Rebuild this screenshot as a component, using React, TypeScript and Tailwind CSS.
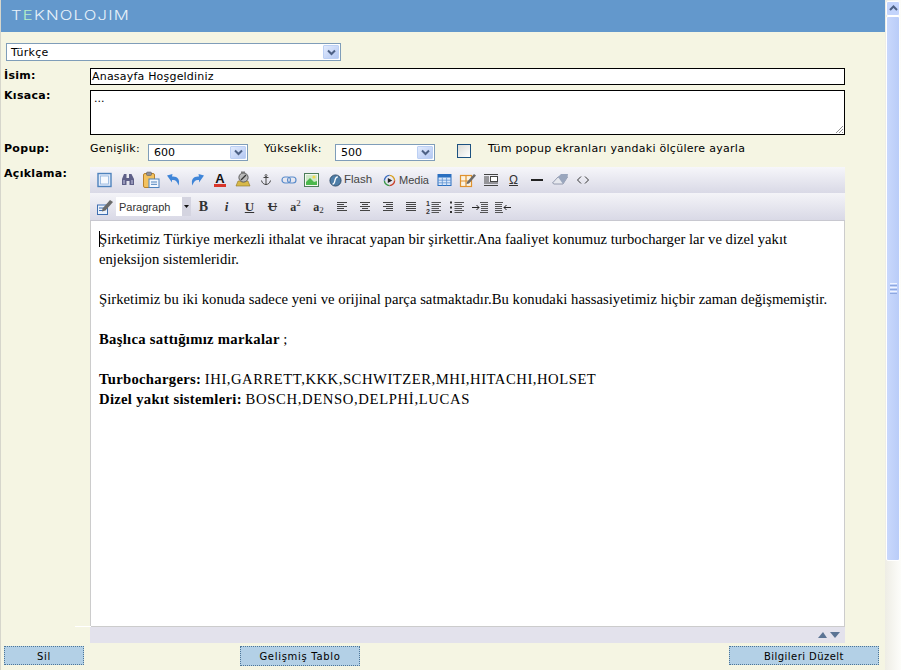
import React from "react";

const V = "[font-family:DejaVu_Sans,sans-serif]";

function Chevron() {
  return (
    <span className="flex h-full w-[16px] items-center justify-center rounded-[1px] border border-[#bcd0f4] bg-gradient-to-br from-[#e2ebfd] to-[#b4c8f2]">
      <svg width="9" height="7" viewBox="0 0 9 7">
        <path d="M1 1.5 L4.5 5 L8 1.5" fill="none" stroke="#4d6185" strokeWidth="2" />
      </svg>
    </span>
  );
}

function Select({ value, className, textClass }: { value: string; className: string; textClass: string }) {
  return (
    <div className={`flex items-stretch border border-[#7f9db9] bg-white p-px ${className}`}>
      <span className={`flex-1 text-[11px] text-black ${V} ${textClass}`}>{value}</span>
      <Chevron />
    </div>
  );
}

const S = ({ children }: { children: React.ReactNode }) => (
  <svg width="18" height="18" viewBox="0 0 18 18">{children}</svg>
);

const Lines = ({ rows }: { rows: [number, number][] }) => (
  <S>
    {rows.map(([x, w], i) => (
      <rect key={i} x={x} y={4 + i * 2} width={w} height="1" fill="#444" />
    ))}
  </S>
);

const Fullscreen = () => (
  <S>
    <rect x="2" y="2.5" width="13" height="13" fill="#dfeafa" stroke="#4f83bd" strokeWidth="1.4" />
    <rect x="4.5" y="5" width="8" height="8" fill="#f6f9fe" stroke="#8fb2dc" strokeWidth="0.8" />
  </S>
);
const Binoculars = () => (
  <S>
    <path d="M3 8 L5 3 H7.5 V7 H10 V3 H12.5 L15 8 V14 H10.5 V10 H7.5 V14 H3 Z" fill="#5f6088" />
    <rect x="4" y="9" width="2" height="4" fill="#9596b8" />
    <rect x="12" y="9" width="2" height="4" fill="#9596b8" />
  </S>
);
const Paste = () => (
  <S>
    <rect x="1.5" y="2.5" width="11" height="14" rx="1.5" fill="#f3c25f" stroke="#b9812a" />
    <rect x="4.5" y="1" width="5" height="3.5" rx="1" fill="#8f8f98" stroke="#555" strokeWidth="0.5" />
    <rect x="7" y="8" width="10" height="8.5" fill="#f4f8fe" stroke="#4f83bd" />
    <rect x="9" y="10.5" width="6" height="1" fill="#4f83bd" />
    <rect x="9" y="12.8" width="6" height="1" fill="#4f83bd" />
  </S>
);
const Undo = () => (
  <S>
    <path d="M2 4.5 L7.5 3 L7 5.5 C12 5 15.5 8 13.5 14.5 C12.5 10.5 10.5 8.5 7 9 L7 11.5 Z" fill="#3f85d8" />
  </S>
);
const Redo = () => (
  <S>
    <path d="M16 4.5 L10.5 3 L11 5.5 C6 5 2.5 8 4.5 14.5 C5.5 10.5 7.5 8.5 11 9 L11 11.5 Z" fill="#3f85d8" />
  </S>
);
const TextColor = () => (
  <S>
    <text x="9" y="12" textAnchor="middle" fontSize="13" fontWeight="700" fontFamily="Liberation Sans" fill="#111">A</text>
    <rect x="3" y="13" width="12" height="3" fill="#d8352a" />
  </S>
);
const Highlight = () => (
  <S>
    <path d="M2 15 L4 10 L14 10 L16 15 Z" fill="#d8b94a" stroke="#8c7426" strokeWidth="0.6" />
    <circle cx="9.5" cy="6.5" r="4.6" fill="#b8b8b8" stroke="#5c5c5c" />
    <path d="M7 9 L12 4" stroke="#333" strokeWidth="1.2" />
    <rect x="7" y="0.5" width="4" height="2" fill="#777" />
  </S>
);
const AnchorIcon = () => (
  <S>
    <path d="M9 5 V14 M6.5 6.5 H11.5 M4.5 9.5 C5 12 7 13.5 9 13.5 C11 13.5 13 12 13.5 9.5" fill="none" stroke="#444" strokeWidth="1" />
    <circle cx="9" cy="4.5" r="1" fill="none" stroke="#444" strokeWidth="0.8" />
  </S>
);
const LinkIcon = () => (
  <S>
    <rect x="2" y="6" width="8.5" height="6" rx="3" fill="none" stroke="#5a8ccb" strokeWidth="1.2" />
    <rect x="7.5" y="6" width="8.5" height="6" rx="3" fill="none" stroke="#5a8ccb" strokeWidth="1.2" />
  </S>
);
const ImageIcon = () => (
  <S>
    <rect x="1.5" y="2.5" width="14" height="13" fill="#f4f8f0" stroke="#4d7d5a" />
    <rect x="3" y="4" width="11" height="7" fill="#cfe8c8" />
    <circle cx="11" cy="6" r="1.6" fill="#f2d84a" />
    <path d="M3 14 L3 11 L7 7 L11 11 L14 10 V14 Z" fill="#4cb84c" />
  </S>
);
const FlashIcon = () => (
  <svg width="13" height="13" viewBox="0 0 14 14">
    <circle cx="7" cy="7" r="6" fill="#4e7ea8" stroke="#2d4a66" />
    <path d="M9.5 3 C7 3.2 6.8 5 6.4 7 C6 9 5.8 10.6 3.8 11" fill="none" stroke="#fff" strokeWidth="1.4" />
  </svg>
);
const MediaIcon = () => (
  <svg width="13" height="13" viewBox="0 0 14 14">
    <path d="M7 1.5 A5.5 5.5 0 0 1 12.5 7" fill="none" stroke="#d8a020" strokeWidth="1.5" />
    <path d="M12.5 7 A5.5 5.5 0 0 1 7 12.5" fill="none" stroke="#c8402a" strokeWidth="1.5" />
    <path d="M7 12.5 A5.5 5.5 0 0 1 1.5 7" fill="none" stroke="#3a9a48" strokeWidth="1.5" />
    <path d="M1.5 7 A5.5 5.5 0 0 1 7 1.5" fill="none" stroke="#3a6cc0" strokeWidth="1.5" />
    <path d="M5.2 4.2 L10 7 L5.2 9.8 Z" fill="#222" />
  </svg>
);
const TableIcon = () => (
  <S>
    <rect x="2" y="3.5" width="13" height="11" fill="#dbe8fa" stroke="#2a6fc0" />
    <rect x="2" y="3.5" width="13" height="3" fill="#2a6fc0" />
    <path d="M6.3 6.5 V14.5 M10.6 6.5 V14.5 M2 9.2 H15 M2 11.8 H15" stroke="#5f93d2" strokeWidth="0.8" />
  </S>
);
const TableEdit = () => (
  <S>
    <rect x="1.5" y="4.5" width="11" height="11" fill="#fbf3e2" stroke="#e0922e" strokeWidth="1.2" />
    <path d="M7 4.5 V15.5 M1.5 10 H12.5" stroke="#e0922e" strokeWidth="1.2" />
    <path d="M8 11 L15 3 L17 4.5 L10 12.5 L7.5 13 Z" fill="#6a6a6a" />
  </S>
);
const Html = () => (
  <S>
    <path d="M2 3.5 H16 M2 14.5 H16 M2 12 H16 M2 6 H7 M2 8 H7 M2 10 H7" stroke="#444" strokeWidth="1" />
    <rect x="8.5" y="5.5" width="7" height="5" fill="#fff" stroke="#444" />
  </S>
);
const Omega = () => (
  <span className="text-[12px] leading-[18px] text-[#333] underline [font-family:Liberation_Sans,sans-serif]">Ω</span>
);
const Hr = () => (
  <S>
    <rect x="3" y="8" width="12" height="2" fill="#222" />
  </S>
);
const Eraser = () => (
  <S>
    <path d="M1.5 12 L7 6 H16.5 L12 13 H3 Z" fill="#e6e8ee" stroke="#8089a0" strokeWidth="0.8" />
    <path d="M7 6 L10 3 H17 L16.5 6 L12 13 Z" fill="#9aa6bd" />
  </S>
);
const Code = () => (
  <S>
    <path d="M7 5.5 L3.5 9 L7 12.5 M11 5.5 L14.5 9 L11 12.5" fill="none" stroke="#333" />
  </S>
);
const EditIcon = () => (
  <S>
    <rect x="1.5" y="7" width="10" height="9.5" fill="#eaf1fb" stroke="#3f6fb0" />
    <path d="M3 10 H8 M3 12.5 H7" stroke="#3f6fb0" />
    <path d="M6.5 10.5 L14 2 L17 4 L9.5 12.5 L6 13.5 Z" fill="#6a6a6a" />
  </S>
);
const Ol = () => (
  <S>
    <text x="1" y="8" fontSize="7" fontWeight="700" fontFamily="Liberation Sans" fill="#333">1</text>
    <text x="1" y="15.5" fontSize="7" fontWeight="700" fontFamily="Liberation Sans" fill="#333">2</text>
    <path d="M6.5 4.5 H16 M6.5 6.5 H14 M6.5 8.5 H16 M6.5 10.5 H14 M6.5 12.5 H16 M6.5 14.5 H14" stroke="#444" strokeWidth="0.9" />
  </S>
);
const Ul = () => (
  <S>
    <path d="M6.5 4.5 H16 M6.5 6.5 H14 M6.5 8.5 H16 M6.5 10.5 H14 M6.5 12.5 H16 M6.5 14.5 H14" stroke="#444" strokeWidth="0.9" />
    <rect x="2" y="3.5" width="2" height="2" fill="#333" />
    <rect x="2" y="8.5" width="2" height="2" fill="#333" />
    <rect x="2" y="13" width="2" height="2" fill="#333" />
  </S>
);
const Indent = () => (
  <S>
    <path d="M9 4.5 H17 M10 6.5 H17 M10 8.5 H17 M10 10.5 H17 M10 12.5 H17 M9 14.5 H17" stroke="#444" strokeWidth="0.9" />
    <path d="M1 9.5 H8 M5.5 7 L8 9.5 L5.5 12" fill="none" stroke="#222" />
  </S>
);
const Outdent = () => (
  <S>
    <path d="M1 4.5 H9 M1 6.5 H8 M1 8.5 H8 M1 10.5 H8 M1 12.5 H8 M1 14.5 H9" stroke="#444" strokeWidth="0.9" />
    <path d="M17 9.5 H10 M12.5 7 L10 9.5 L12.5 12" fill="none" stroke="#222" />
  </S>
);

const Btn = ({ children }: { children: React.ReactNode }) => (
  <span className="flex h-[26px] w-[23px] shrink-0 items-center justify-center">{children}</span>
);

const G = ({ children, className }: { children: React.ReactNode; className?: string }) => (
  <span className={`text-[#333] [font-family:Liberation_Serif,serif] ${className ?? ""}`}>{children}</span>
);

function Label({ children, className }: { children: React.ReactNode; className?: string }) {
  return (
    <span className={`w-[86px] shrink-0 pl-[3px] text-[11px] font-bold tracking-[0.3px] text-black ${V} ${className ?? ""}`}>
      {children}
    </span>
  );
}

const action = `border border-dotted border-[#4d7698] bg-[#b3d0e6] pt-px text-[10px] text-black ${V}`;
const strong = "font-bold tracking-[0.3px]";

export default function App() {
  return (
    <div className="flex h-[670px] w-[901px] overflow-hidden bg-[#f5f5e3]">
      <main className="flex h-[670px] w-[885px] shrink-0 flex-col border-l border-[#d6d6cc]">
        <header className="flex h-[32px] shrink-0 items-center bg-[#6398cc] pl-[10px]">
          <span className="origin-left scale-x-[1.28] text-[13px] font-light tracking-[0.95px] text-[#e8f2fa] [font-family:Inter,sans-serif]">
            T<span className="text-[#b8f0c8]">E</span>KNOLOJIM
          </span>
        </header>

        <Select value="Türkçe" className="ml-[5px] mt-[11px] h-[18px] w-[335px]" textClass="pl-[3px] leading-[15px] tracking-[0.3px]" />

        <div className="mt-[7px] flex h-[17px] items-start">
          <Label className="leading-[15px]">İsim:</Label>
          <div className={`ml-[3px] h-[17px] w-[755px] border border-black bg-white pl-[1px] text-[11px] leading-[15px] tracking-[0.2px] text-black ${V}`}>
            Anasayfa Hoşgeldiniz
          </div>
        </div>

        <div className="mt-[5px] flex h-[45px] items-start">
          <Label className="leading-[12px]">Kısaca:</Label>
          <div className={`relative ml-[3px] h-[45px] w-[755px] border border-black bg-white pl-[3px] text-[11px] leading-[16px] text-black ${V}`}>
            ...
            <svg className="absolute bottom-0 right-0" width="10" height="10" viewBox="0 0 10 10">
              <path d="M2 9 L9 2 M5 9 L9 5 M8 9 L9 8" stroke="#777" strokeWidth="0.8" />
            </svg>
          </div>
        </div>

        <div className="mt-[7px] flex h-[19px] items-start">
          <Label className="leading-[13px]">Popup:</Label>
          <span className={`ml-[3px] w-[58px] text-[11px] leading-[13px] tracking-[0.3px] text-black ${V}`}>Genişlik:</span>
          <Select value="600" className="mt-[2px] h-[17px] w-[100px]" textClass="pl-[4px] leading-[13px]" />
          <span className={`ml-[16px] w-[71px] text-[11px] leading-[13px] tracking-[0.4px] text-black ${V}`}>Yükseklik:</span>
          <Select value="500" className="mt-[2px] h-[17px] w-[100px]" textClass="pl-[4px] leading-[13px]" />
          <span className="ml-[22px] mt-[2px] h-[14px] w-[14px] border border-[#1c5180] bg-gradient-to-br from-[#dcdcd7] to-white" />
          <span className={`ml-[17px] text-[11px] leading-[13px] tracking-[0.28px] text-black ${V}`}>
            Tüm popup ekranları yandaki ölçülere ayarla
          </span>
        </div>

        <div className="mt-[6px] flex items-start">
          <Label className="leading-[13px]">Açıklama:</Label>
          <div className="ml-[3px] flex h-[476px] w-[755px] flex-col">
            <div className="flex h-[26px] shrink-0 items-center bg-gradient-to-b from-[#f6f6fa] to-[#d9d9e6] pl-[3px] text-[#333]">
              <Btn><Fullscreen /></Btn>
              <Btn><Binoculars /></Btn>
              <Btn><Paste /></Btn>
              <Btn><Undo /></Btn>
              <Btn><Redo /></Btn>
              <Btn><TextColor /></Btn>
              <Btn><Highlight /></Btn>
              <Btn><AnchorIcon /></Btn>
              <Btn><LinkIcon /></Btn>
              <Btn><ImageIcon /></Btn>
              <span className="flex w-[54px] shrink-0 items-center pl-[6px] text-[11.5px] text-[#444] [font-family:Liberation_Sans,sans-serif]">
                <FlashIcon />
                <span className="ml-[2px]">Flash</span>
              </span>
              <span className="flex w-[56px] shrink-0 items-center pl-[6px] text-[11px] text-[#444] [font-family:Liberation_Sans,sans-serif]">
                <MediaIcon />
                <span className="ml-[3px]">Media</span>
              </span>
              <Btn><TableIcon /></Btn>
              <Btn><TableEdit /></Btn>
              <Btn><Html /></Btn>
              <Btn><Omega /></Btn>
              <Btn><Hr /></Btn>
              <Btn><Eraser /></Btn>
              <Btn><Code /></Btn>
            </div>
            <div className="flex h-[28px] shrink-0 items-center border-b border-[#c8c8d0] bg-gradient-to-b from-[#f4f4f8] to-[#d9d9e6] pl-[3px]">
              <Btn><EditIcon /></Btn>
              <span className="mr-px flex h-[19px] w-[75px] shrink-0 items-stretch bg-white">
                <span className="flex-1 pl-[3px] text-[11px] leading-[20px] text-[#333] [font-family:Liberation_Sans,sans-serif]">Paragraph</span>
                <span className="flex w-[9px] items-center justify-center bg-[#d4d4e0]">
                  <svg width="5" height="3" viewBox="0 0 5 3"><path d="M0 0 H5 L2.5 3 Z" fill="#111" /></svg>
                </span>
              </span>
              <Btn><G className="text-[14px] font-bold">B</G></Btn>
              <Btn><G className="text-[13px] font-bold italic">i</G></Btn>
              <Btn><G className="text-[13px] font-bold underline">U</G></Btn>
              <Btn><G className="text-[13px] font-bold line-through">U</G></Btn>
              <Btn><G className="text-[12px] font-bold">a<sup className="text-[9px] font-normal">2</sup></G></Btn>
              <Btn><G className="text-[12px] font-bold">a<sub className="text-[9px] font-normal">2</sub></G></Btn>
              <Btn><Lines rows={[[4, 10], [4, 7], [4, 10], [4, 7], [4, 10]]} /></Btn>
              <Btn><Lines rows={[[4, 10], [6, 6], [4, 10], [6, 6], [4, 10]]} /></Btn>
              <Btn><Lines rows={[[4, 10], [7, 7], [4, 10], [7, 7], [4, 10]]} /></Btn>
              <Btn><Lines rows={[[4, 10], [4, 10], [4, 10], [4, 10], [4, 10]]} /></Btn>
              <Btn><Ol /></Btn>
              <Btn><Ul /></Btn>
              <Btn><Indent /></Btn>
              <Btn><Outdent /></Btn>
            </div>
            <div className="relative min-h-0 flex-1 border-x border-b border-[#cccccc] bg-white pl-[8px] pt-[8px] text-[14.67px] leading-[20px] text-black [font-family:Liberation_Serif,serif]">
              <span className="-mr-px inline-block h-[16px] w-px bg-black align-[-3px]" />
              Şirketimiz Türkiye merkezli ithalat ve ihracat yapan bir şirkettir.Ana faaliyet konumuz turbocharger lar ve dizel yakıt
              <br />
              enjeksijon sistemleridir.
              <br />
              <br />
              <span className="tracking-[0.03px]">Şirketimiz bu iki konuda sadece yeni ve orijinal parça satmaktadır.Bu konudaki hassasiyetimiz hiçbir zaman değişmemiştir.</span>
              <br />
              <br />
              <span className={strong}>Başlıca sattığımız markalar</span> ;
              <br />
              <br />
              <span className={strong}>Turbochargers:</span> <span className="tracking-[0.53px]">IHI,GARRETT,KKK,SCHWITZER,MHI,HITACHI,HOLSET</span>
              <br />
              <span className={strong}>Dizel yakıt sistemleri:</span> <span className="tracking-[0.65px]">BOSCH,DENSO,DELPHİ,LUCAS</span>
              <span className="absolute -bottom-px -left-[16px] h-px w-[16px] bg-white" />
            </div>
            <div className="flex h-[16px] shrink-0 items-center justify-end bg-[#e3e2ec] pr-[2px]">
              <svg width="26" height="8" viewBox="0 0 26 8">
                <path d="M1 7 L6 1 L10 7 Z" fill="#5b7494" />
                <path d="M13 1 H23 L18 7 Z" fill="#5b7494" />
              </svg>
            </div>
          </div>
        </div>

        <div className="mt-[3px] flex items-start">
          <button className={`ml-[3px] h-[19px] w-[80px] tracking-[0.7px] ${action}`}>Sil</button>
          <button className={`ml-[156px] h-[20px] w-[120px] tracking-[0.7px] ${action}`}>Gelişmiş Tablo</button>
          <button className={`ml-[369px] h-[19px] w-[150px] tracking-[0.45px] ${action}`}>Bilgileri Düzelt</button>
        </div>
      </main>

      <aside className="flex h-[670px] w-[16px] shrink-0 flex-col bg-gradient-to-r from-[#eeede5] to-[#fdfdfa]">
        <div className="mx-px mt-px flex h-[15px] items-center justify-center rounded-[2px] border border-white bg-[#c3d4fc]">
          <svg width="9" height="7" viewBox="0 0 9 7">
            <path d="M1 5 L4.5 1.5 L8 5" fill="none" stroke="#4d6185" strokeWidth="2" />
          </svg>
        </div>
        <div className="mx-px flex h-[545px] items-center justify-center rounded-[2px] border border-white bg-gradient-to-r from-[#c9d8fc] to-[#b9ccf8]">
          <span className="flex w-[7px] flex-col gap-px">
            <span className="h-px bg-[#eef3ff]" />
            <span className="h-px bg-[#8ea8e0]" />
            <span className="h-px bg-[#eef3ff]" />
            <span className="h-px bg-[#8ea8e0]" />
            <span className="h-px bg-[#eef3ff]" />
            <span className="h-px bg-[#8ea8e0]" />
          </span>
        </div>
      </aside>
    </div>
  );
}
